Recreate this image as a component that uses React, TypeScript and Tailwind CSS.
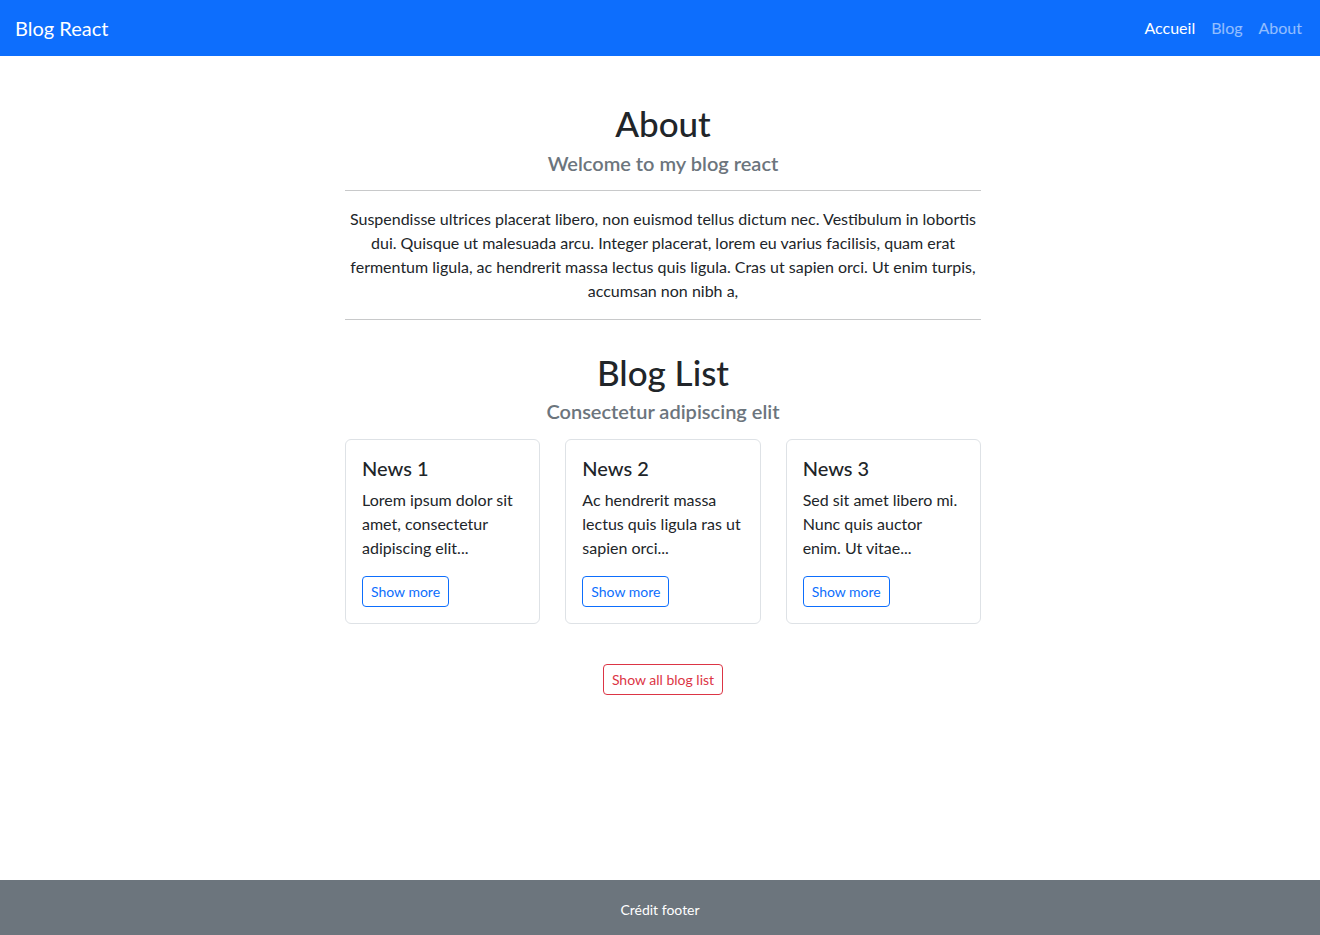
import React from 'react';

const news = [
  { title: 'News 1', text: 'Lorem ipsum dolor sit amet, consectetur adipiscing elit...' },
  { title: 'News 2', text: 'Ac hendrerit massa lectus quis ligula ras ut sapien orci...' },
  { title: 'News 3', text: 'Sed sit amet libero mi. Nunc quis auctor enim. Ut vitae...' },
];

const App = () => {
  return (
    <div className="flex min-h-screen flex-col bg-white font-['Lato','Noto_Sans',sans-serif] text-[#212529]">
      <nav className="flex h-[56px] items-center justify-between bg-[#0d6efd] pl-[15px] pr-[10px]">
        <a className="text-[20px] text-white">Blog React</a>
        <div className="flex text-[16px]">
          <a className="px-2 text-white">Accueil</a>
          <a className="px-2 text-white/55">Blog</a>
          <a className="px-2 text-white/55">About</a>
        </div>
      </nav>

      <main className="mx-auto w-[642px] pl-[6px] pt-[43px] text-center">
        <h1 className="text-[35px] font-medium leading-[48px]">About</h1>
        <h5 className="mt-[4px] text-[20px] font-semibold leading-[24px] text-[#6c757d]">Welcome to my blog react</h5>
        <hr className="mt-[15px] border-t border-[#c8c9ca]" />
        <p className="mt-[16px] text-[16px] leading-[24px]">
          Suspendisse ultrices placerat libero, non euismod tellus dictum nec. Vestibulum in lobortis dui. Quisque ut
          malesuada arcu. Integer placerat, lorem eu varius facilisis, quam erat fermentum ligula, ac hendrerit massa
          lectus quis ligula. Cras ut sapien orci. Ut enim turpis, accumsan non nibh a,
        </p>
        <hr className="mt-[16px] border-t border-[#c8c9ca]" />

        <h1 className="mt-[28px] text-[35px] font-medium leading-[48px]">Blog List</h1>
        <h5 className="mt-[3px] text-[20px] font-semibold leading-[24px] text-[#6c757d]">Consectetur adipiscing elit</h5>

        <div className="mt-[16px] grid grid-cols-3 gap-[25px] text-left">
          {news.map((n) => (
            <div key={n.title} className="rounded-[6px] border border-[#dee2e6] p-4">
              <h5 className="text-[20px] font-medium leading-[24px]">{n.title}</h5>
              <p className="mt-[8px] text-[16px] leading-[24px]">{n.text}</p>
              <button className="mt-[16px] h-[31px] rounded-[4px] border border-[#0d6efd] px-2 text-[14px] text-[#0d6efd]">
                Show more
              </button>
            </div>
          ))}
        </div>

        <button className="mt-[40px] h-[31px] rounded-[4px] border border-[#dc3545] px-2 text-[14px] text-[#dc3545]">
          Show all blog list
        </button>
      </main>

      <footer className="mt-auto flex h-[55px] items-center justify-center bg-[#6c757d] pt-[4px] text-[14px] text-white">
        Crédit footer
      </footer>
    </div>
  );
};

export default App;
